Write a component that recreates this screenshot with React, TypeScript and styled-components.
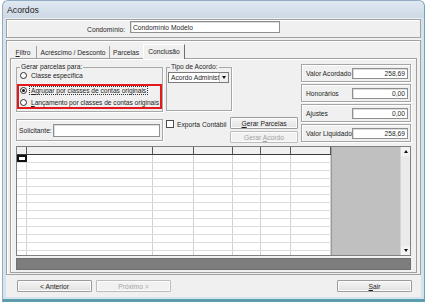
import React from 'react';
import styled, { createGlobalStyle } from 'styled-components';

const GlobalStyle = createGlobalStyle`
  * { box-sizing: border-box; }
  html, body { margin: 0; padding: 0; background: #ffffff; }
  body {
    font-family: "Liberation Sans", Arial, sans-serif;
    font-size: 6.7px;
    color: #1f1f1f;
  }
  fieldset, legend { font: inherit; }
`;

const Window = styled.div`
  margin-left: 2px;
  width: 423px;
  height: 302px;
  display: flex;
  flex-direction: column;
  padding: 0 3px 2px;
  background: linear-gradient(#e0e8f1 0, #cdd9e6 17px, #d6e2ed 17px);
  border: 1px solid #93adc4;
  border-bottom: 3px solid #5b9cad;
  border-right-color: #6aa6b8;
  border-radius: 6px 6px 0 0;
`;

const TitleBar = styled.div`
  height: 17px;
  display: flex;
  align-items: center;
  padding-left: 1px;
  font-size: 8.7px;
  color: #1b1b1b;
`;

const Client = styled.div`
  flex: 1;
  display: flex;
  flex-direction: column;
  padding-top: 1px;
  background: #f0f0f0;
`;

const TopPanel = styled.div`
  height: 19px;
  display: grid;
  grid-template-columns: 118px 150px;
  column-gap: 5px;
  align-items: start;
  padding-top: 1px;
  border: 1px solid #a0a0a0;
  box-shadow: inset 1px 1px 0 #ffffff;
`;

const FieldLabel = styled.span`
  align-self: center;
  text-align: right;
  white-space: nowrap;
`;

const Field = styled.div<{ $w: number; $h?: number; $right?: boolean }>`
  width: ${p => p.$w}px;
  height: ${p => p.$h ?? 12}px;
  display: flex;
  align-items: center;
  justify-content: ${p => (p.$right ? 'flex-end' : 'flex-start')};
  padding: 0 2px;
  background: #ffffff;
  border: 1px solid #8e8f8f;
  box-shadow: inset 1px 1px 0 #dcdcdc;
  white-space: nowrap;
  overflow: hidden;
  flex-shrink: 0;
`;

const MainPanel = styled.div`
  margin-top: 2px;
  height: 235px;
  display: flex;
  flex-direction: column;
  padding: 3px 3px 1px;
  border: 1px solid #a0a0a0;
  box-shadow: inset 1px 1px 0 #ffffff;
`;

const TabStrip = styled.div`
  height: 14px;
  display: flex;
  align-items: flex-end;
`;

const Tab = styled.div<{ $w: number; $active?: boolean; $noSep?: boolean }>`
  width: ${p => p.$w}px;
  height: 12px;
  display: flex;
  align-items: center;
  justify-content: center;
  white-space: nowrap;
  border-right: 1px solid ${p => (p.$noSep ? 'transparent' : p.$active ? '#6f6f6f' : '#a0a0a0')};
  ${p =>
    p.$active &&
    `
    border-top: 1px solid #ffffff;
    border-left: 1px solid #ffffff;
    background: #f0f0f0;
    margin-bottom: -1px;
    height: 15px;
    padding-bottom: 1px;
    position: relative;
    z-index: 1;
  `}
`;

const TabPage = styled.div`
  flex: 1;
  display: flex;
  flex-direction: column;
  padding: 4px 5px 2px;
  border: 1px solid #a0a0a0;
  box-shadow: inset 1px 1px 0 #ffffff;
`;

const TopSection = styled.div`
  height: 80px;
  display: grid;
  grid-template-columns: 147px 132px 110px;
  column-gap: 3px;
`;

const Column = styled.div<{ $gap?: number; $top?: number }>`
  display: flex;
  flex-direction: column;
  gap: ${p => p.$gap ?? 0}px;
  padding-top: ${p => p.$top ?? 0}px;
`;

const GroupBox = styled.fieldset<{ $w?: number; $h?: number }>`
  margin: 0;
  padding: 0 0 2px;
  min-width: 0;
  width: ${p => (p.$w ? `${p.$w}px` : 'auto')};
  height: ${p => (p.$h ? `${p.$h}px` : 'auto')};
  border: 1px solid #a8a8a8;
  box-shadow: 1px 1px 0 #ffffff;
  display: flex;
  flex-direction: column;
`;

const Legend = styled.legend`
  padding: 0 1px;
  margin-left: 3px;
  line-height: 8px;
  height: 8px;
  white-space: nowrap;
`;

const RadioRow = styled.div<{ $indent: number; $h?: number }>`
  height: ${p => p.$h ?? 8}px;
  display: flex;
  align-items: center;
  gap: 3px;
  padding-left: ${p => p.$indent}px;
  white-space: nowrap;
`;

const RadioDot = styled.span<{ $checked?: boolean }>`
  width: 7px;
  height: 7px;
  flex-shrink: 0;
  border-radius: 50%;
  border: 1px solid #2f2f2f;
  background: #ffffff;
  display: inline-flex;
  align-items: center;
  justify-content: center;
  &::after {
    content: '';
    width: 3px;
    height: 3px;
    border-radius: 50%;
    background: ${p => (p.$checked ? '#151515' : 'transparent')};
  }
`;

const RadioText = styled.span<{ $focus?: boolean }>`
  line-height: 7px;
  padding: 0 1px;
  letter-spacing: -0.05px;
  outline: ${p => (p.$focus ? '1px dotted #333333' : 'none')};
`;

const Highlight = styled.div`
  margin-top: 4px;
  display: flex;
  flex-direction: column;
  gap: 4px;
  padding-bottom: 1px;
  border: 2px solid #e3191b;
`;

const Select = styled.div`
  margin: 1px 2px 0 1px;
  height: 11px;
  display: flex;
  border: 1px solid #7a7a7a;
  background: #ffffff;
`;

const SelectText = styled.span`
  flex: 1;
  padding-left: 2px;
  line-height: 9px;
  white-space: nowrap;
`;

const SelectButton = styled.span`
  width: 9px;
  display: flex;
  align-items: center;
  justify-content: center;
  background: #f0f0f0;
  border-left: 1px solid #c4c4c4;
`;

const Arrow = styled.span<{ $dir: 'up' | 'down' }>`
  width: 0;
  height: 0;
  border-left: 2.5px solid transparent;
  border-right: 2.5px solid transparent;
  ${p => (p.$dir === 'up' ? 'border-bottom: 3px solid #111111;' : 'border-top: 3px solid #111111;')}
`;

const MiddleBottom = styled.div`
  margin-top: 6px;
  display: flex;
  justify-content: space-between;
  align-items: flex-start;
`;

const CheckRow = styled.label`
  margin-top: 3px;
  display: flex;
  align-items: center;
  gap: 3px;
  white-space: nowrap;
`;

const CheckBox = styled.span`
  width: 8px;
  height: 8px;
  border: 1px solid #4d4d4d;
  background: #ffffff;
`;

const ButtonStack = styled.div`
  width: 68px;
  display: flex;
  flex-direction: column;
  gap: 2px;
`;

const Button = styled.button<{ $w?: number }>`
  width: ${p => (p.$w ? `${p.$w}px` : '100%')};
  height: 12px;
  padding: 0;
  font: inherit;
  color: #1f1f1f;
  background: linear-gradient(#f5f5f5, #e2e2e2);
  border: 1px solid #9c9c9c;
  border-radius: 1px;
  box-shadow: inset 0 0 0 1px #fbfbfb;
  white-space: nowrap;
  &:disabled {
    color: #a3a3a3;
    border-color: #bdbdbd;
    background: #f1f1f1;
  }
`;

const Panel = styled.div<{ $h: number; $padL?: number }>`
  height: ${p => p.$h}px;
  display: flex;
  align-items: center;
  justify-content: space-between;
  padding: 0 2px 0 ${p => p.$padL ?? 4}px;
  border: 1px solid #a6a6a6;
  box-shadow: inset 1px 1px 0 #ffffff, 1px 1px 0 #ffffff;
  white-space: nowrap;
`;

const GridFrame = styled.div`
  margin-top: 3px;
  height: 110px;
  display: flex;
  border: 1px solid #7f7f7f;
  background: #ffffff;
`;

const Table = styled.div`
  width: 314px;
  display: flex;
  flex-direction: column;
  overflow: hidden;
`;

const Row = styled.div<{ $head?: boolean }>`
  height: 8px;
  flex-shrink: 0;
  display: flex;
  background: ${p => (p.$head ? '#f0f0f0' : '#ffffff')};
  border-bottom: 1px solid ${p => (p.$head ? '#3c3c3c' : '#dcdcdc')};
`;

const Cell = styled.div<{ $w: number; $head?: boolean; $focus?: boolean }>`
  width: ${p => p.$w}px;
  height: 100%;
  border-right: 1px solid ${p => (p.$head ? '#5a5a5a' : '#d2d2d2')};
  outline: ${p => (p.$focus ? '2px solid #111111' : 'none')};
  outline-offset: -2px;
`;

const GrayArea = styled.div`
  flex: 1;
  background: #c0c0c0;
  border-left: 1px solid #9a9a9a;
`;

const ScrollBar = styled.div`
  width: 10px;
  display: flex;
  flex-direction: column;
  justify-content: space-between;
  background: #ebebeb;
  border-left: 1px solid #d6d6d6;
`;

const ScrollButton = styled.div`
  height: 9px;
  display: flex;
  align-items: center;
  justify-content: center;
  background: #f3f3f3;
`;

const StatusBar = styled.div`
  margin-top: 2px;
  height: 12px;
  background: #7d7d7d;
  border: 1px solid #6e6e6e;
`;

const Footer = styled.div`
  flex: 1;
  display: flex;
  align-items: flex-start;
  gap: 4px;
  padding: 5px 9px 0 11px;
`;

const Spacer = styled.div`
  flex: 1;
`;

const COLS = [10, 126, 41, 39, 28, 30, 40];
const ROWS = Array.from({ length: 13 }, (_, i) => i);

const ValueBox: React.FC<{ label: string; value: string }> = ({ label, value }) => (
  <Panel $h={18}>
    <span>{label}</span>
    <Field $w={56} $h={11} $right>
      {value}
    </Field>
  </Panel>
);

const App: React.FC = () => {
  return (
    <>
      <GlobalStyle />
      <Window>
        <TitleBar>Acordos</TitleBar>
        <Client>
          <TopPanel>
            <FieldLabel>Condomínio:</FieldLabel>
            <Field $w={150}>Condomínio Modelo</Field>
          </TopPanel>

          <MainPanel>
            <TabStrip>
              <Tab $w={27}>
                <span><u>F</u>iltro</span>
              </Tab>
              <Tab $w={73}>Acréscimo / Desconto</Tab>
              <Tab $w={33} $noSep>Parcelas</Tab>
              <Tab $w={42} $active>Conclusão</Tab>
            </TabStrip>

            <TabPage>
              <TopSection>
                <Column $gap={7}>
                  <GroupBox>
                    <Legend>Gerar parcelas para:</Legend>
                    <RadioRow $indent={3} $h={9}>
                      <RadioDot />
                      <RadioText>Classe específica</RadioText>
                    </RadioRow>
                    <Highlight>
                      <RadioRow $indent={1}>
                        <RadioDot $checked />
                        <RadioText $focus>
                          <u>A</u>grupar por classes de contas originais
                        </RadioText>
                      </RadioRow>
                      <RadioRow $indent={1}>
                        <RadioDot />
                        <RadioText>
                          <u>L</u>ançamento por classes de contas originais
                        </RadioText>
                      </RadioRow>
                    </Highlight>
                  </GroupBox>
                  <Panel $h={22} $padL={2}>
                    <span>Solicitante:</span>
                    <Field $w={107} $h={13} />
                  </Panel>
                </Column>

                <Column>
                  <GroupBox $w={66} $h={48}>
                    <Legend>Tipo de Acordo:</Legend>
                    <Select>
                      <SelectText>Acordo Administ</SelectText>
                      <SelectButton>
                        <Arrow $dir="down" />
                      </SelectButton>
                    </Select>
                  </GroupBox>
                  <MiddleBottom>
                    <CheckRow>
                      <CheckBox />
                      <span>Exporta Contábil</span>
                    </CheckRow>
                    <ButtonStack>
                      <Button>
                        <u>G</u>erar Parcelas
                      </Button>
                      <Button disabled>
                        Gerar <u>A</u>cordo
                      </Button>
                    </ButtonStack>
                  </MiddleBottom>
                </Column>

                <Column $gap={2} $top={1}>
                  <ValueBox label="Valor Acordado" value="258,69" />
                  <ValueBox label="Honorários" value="0,00" />
                  <ValueBox label="Ajustes" value="0,00" />
                  <ValueBox label="Valor Liquidado" value="258,69" />
                </Column>
              </TopSection>

              <GridFrame>
                <Table>
                  <Row $head>
                    {COLS.map((w, i) => (
                      <Cell key={i} $w={w} $head />
                    ))}
                  </Row>
                  {ROWS.map(r => (
                    <Row key={r}>
                      {COLS.map((w, i) => (
                        <Cell key={i} $w={w} $focus={r === 0 && i === 0} />
                      ))}
                    </Row>
                  ))}
                </Table>
                <GrayArea />
                <ScrollBar>
                  <ScrollButton>
                    <Arrow $dir="up" />
                  </ScrollButton>
                  <ScrollButton>
                    <Arrow $dir="down" />
                  </ScrollButton>
                </ScrollBar>
              </GridFrame>

              <StatusBar />
            </TabPage>
          </MainPanel>

          <Footer>
            <Button $w={75}>&lt; Anterior</Button>
            <Button $w={75} disabled>
              Próximo &gt;
            </Button>
            <Spacer />
            <Button $w={75}>
              <u>S</u>air
            </Button>
          </Footer>
        </Client>
      </Window>
    </>
  );
};

export default App;
